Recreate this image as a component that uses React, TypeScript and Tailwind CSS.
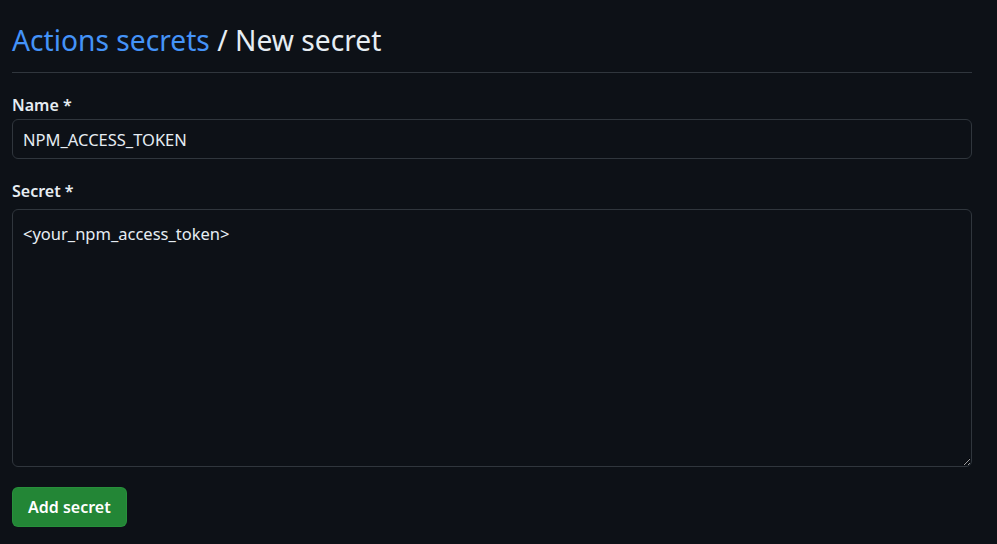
export default function App() {
  return (
    <div
      className="min-h-screen w-full bg-[#0d1117] text-[#e6edf3]"
      style={{ fontFamily: "'Segoe UI', 'Noto Sans', 'Open Sans', sans-serif" }}
    >
      <div className="w-[972px] pl-[12px] pt-[22px]">
        {/* Header */}
        <div className="border-b border-[#30363d] pb-[14px]">
          <h1 className="text-[28.2px] leading-[36px] font-normal">
            <a className="text-[#4493f8]">Actions secrets</a>
            <span> / New secret</span>
          </h1>
        </div>

        <form className="mt-[20px]">
          <label className="block text-[16px] leading-[24px] font-semibold mb-[2px]">Name *</label>
          <input
            readOnly
            value="NPM_ACCESS_TOKEN"
            className="block w-[960px] h-[40px] px-[10px] rounded-[6px] border border-[#30363d] bg-[#0d1117] text-[16.5px] text-[#e6edf3] outline-none"
          />

          <label className="block text-[16px] leading-[24px] font-semibold mt-[20px] mb-[6px]">Secret *</label>
          <textarea
            readOnly
            value="<your_npm_access_token>"
            className="block w-[960px] h-[258px] px-[10px] py-[12px] rounded-[6px] border border-[#30363d] bg-[#0d1117] text-[16.5px] leading-[24px] text-[#e6edf3] outline-none resize-y"
          />

          <button
            type="button"
            className="mt-[20px] h-[40px] px-[15px] rounded-[6px] bg-[#238636] border border-[#2ea043]/40 text-white text-[16px] font-semibold"
          >
            Add secret
          </button>
        </form>
      </div>
    </div>
  );
}
